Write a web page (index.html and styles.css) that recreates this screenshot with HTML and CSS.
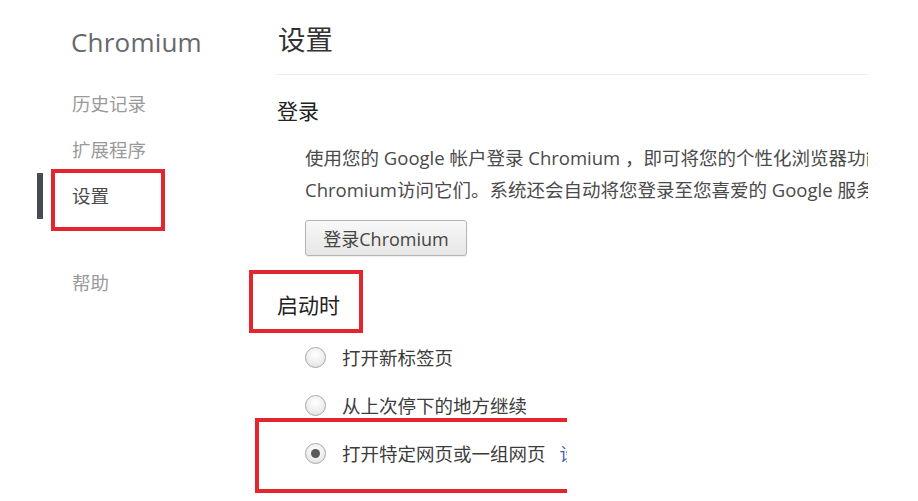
FILE: index.html
```html
<!DOCTYPE html>
<html lang="zh-CN">
<head>
<meta charset="utf-8">
<title>设置</title>
<link rel="stylesheet" href="styles.css">
</head>
<body>
<div class="page">
  <aside class="sidebar">
    <div class="brand">Chromium</div>
    <nav class="nav">
      <div class="nav-item">历史记录</div>
      <div class="nav-item">扩展程序</div>
      <div class="nav-item active">设置</div>
      <div class="nav-item help">帮助</div>
    </nav>
  </aside>
  <main class="main">
    <header class="main-header"><h1 class="page-title">设置</h1></header>
    <section class="section signin">
      <h2 class="section-title">登录</h2>
      <div class="section-body">
        <p class="desc">使用您的 Google 帐户登录 Chromium ，即可将您的个性化浏览器功能保存到网络上，这样您就可以在任何设备上通过<br>Chromium访问它们。系统还会自动将您登录至您喜爱的 Google 服务。</p>
        <button class="btn">登录Chromium</button>
      </div>
    </section>
    <section class="section startup">
      <h2 class="section-title">启动时</h2>
      <div class="radio-list">
        <div class="radio-row"><span class="radio"></span><span class="radio-label">打开新标签页</span></div>
        <div class="radio-row"><span class="radio"></span><span class="radio-label">从上次停下的地方继续</span></div>
        <div class="radio-row clipped"><span class="radio checked"></span><span class="radio-label">打开特定网页或一组网页</span><span class="link">设置网页</span></div>
      </div>
    </section>
  </main>
  <div class="mark mark-nav"></div>
  <div class="mark mark-startup"></div>
  <div class="mark mark-specific"></div>
</div>
</body>
</html>
```

FILE: styles.css
```css
* { box-sizing: border-box; }
html, body { margin: 0; padding: 0; background: #fff; }
body {
  font-family: "Open Sans", "Noto Sans CJK SC", sans-serif;
  color: #333;
}
.page {
  position: relative;
  width: 918px;
  height: 501px;
  overflow: hidden;
  display: flex;
  background: #fff;
}
.sidebar {
  flex: none;
  width: 276px;
  padding: 22px 0 0 72px;
}
.brand {
  font-size: 26px;
  line-height: 40px;
  color: #66686c;
  margin-left: -1px;
  letter-spacing: 0.2px;
}
.nav {
  margin-top: 19px;
  display: flex;
  flex-direction: column;
}
.nav-item {
  font-size: 18.5px;
  line-height: 46px;
  height: 46px;
  color: #9a9a9a;
}
.nav-item.active {
  margin-left: -35px;
  border-left: 6px solid #484b53;
  padding-left: 29px;
  color: #4a4a4a;
}
.nav-item.help {
  margin-top: 41px;
}
.main {
  flex: none;
  width: 592px;
  overflow: hidden;
  padding-top: 20px;
}
.main-header {
  padding-bottom: 14px;
  border-bottom: 1px solid #ececec;
}
.page-title {
  margin: 0;
  font-size: 27.5px;
  font-weight: normal;
  line-height: 40px;
  color: #333;
  padding-left: 2px;
}
.section-title {
  margin: 0;
  font-weight: normal;
  font-size: 21px;
  line-height: 30px;
  color: #222;
  padding-left: 1px;
}
.signin { margin-top: 21px; }
.section-body { padding-left: 29px; }
.desc {
  margin: 16px 0 0;
  font-size: 18.5px;
  line-height: 32px;
  white-space: nowrap;
  color: #4a4a4a;
}
.btn {
  margin-top: 14px;
  height: 36px;
  width: 162px;
  padding: 0;
  font-family: "Open Sans", "Noto Sans CJK SC", sans-serif;
  font-size: 18px;
  color: #444;
  border: 1px solid #b4b4b4;
  border-radius: 3px;
  background: linear-gradient(#f8f8f8, #e6e6e6);
  box-shadow: 0 1px 1px rgba(0,0,0,0.08);
}
.startup { margin-top: 34px; }
.radio-list {
  margin-top: 13px;
  padding-left: 29px;
  display: flex;
  flex-direction: column;
}
.radio-row {
  display: flex;
  align-items: center;
  height: 48px;
  font-size: 18.5px;
  color: #3c3c3c;
  white-space: nowrap;
}
.radio-row.clipped {
  width: 262px;
  overflow: hidden;
}
.radio {
  flex: none;
  width: 21px;
  height: 21px;
  border-radius: 50%;
  border: 1px solid #a8a8a8;
  background: radial-gradient(circle at 50% 35%, #ffffff 0%, #f2f2f2 45%, #dcdcdc 100%);
  margin-right: 16px;
  display: flex;
  align-items: center;
  justify-content: center;
}
.radio.checked::after {
  content: "";
  width: 9px;
  height: 9px;
  border-radius: 50%;
  background: #5a5a5a;
}
.link {
  margin-left: 14px;
  color: #3b5fc0;
}
.mark {
  position: absolute;
  border: 4px solid #e3262e;
}
.mark-nav {
  left: 51px;
  top: 169px;
  width: 114px;
  height: 62px;
}
.mark-startup {
  left: 249px;
  top: 270px;
  width: 114px;
  height: 63px;
}
.mark-specific {
  left: 255px;
  top: 418px;
  width: 312px;
  height: 75px;
  border-right: none;
}
```
